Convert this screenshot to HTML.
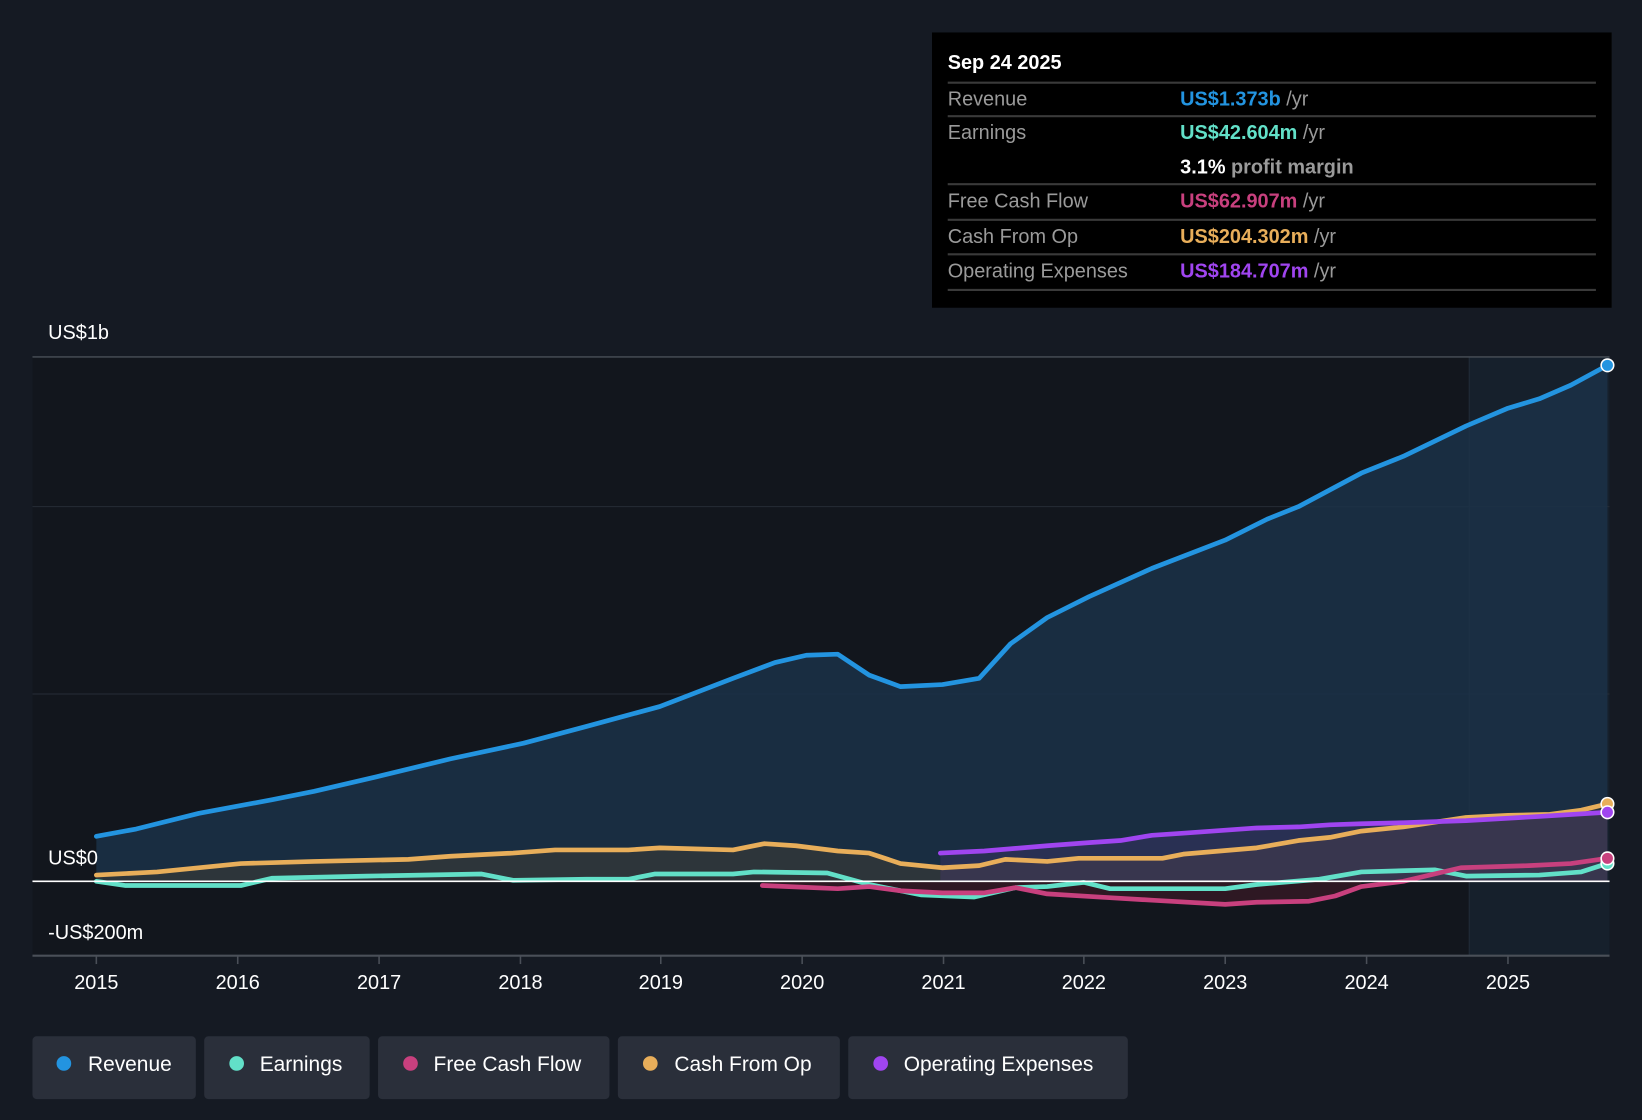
<!DOCTYPE html>
<html><head><meta charset="utf-8"><style>
html,body{margin:0;padding:0;background:#151a23;}
svg{display:block;font-family:"Liberation Sans",sans-serif;}
</style></head><body>
<svg width="1642" height="1120" viewBox="0 0 1568 1070" preserveAspectRatio="none">
<rect width="1568" height="1070" fill="#151a23"/>
<!-- plot background -->
<rect x="31" y="341" width="1506" height="572" fill="#12161d"/>
<rect x="1403" y="341" width="134" height="572" fill="#16202c"/>
<line x1="1403" y1="341" x2="1403" y2="913" stroke="#222b37" stroke-width="1"/>
<!-- gridlines -->
<line x1="31" y1="341" x2="1537" y2="341" stroke="#4a4f58" stroke-width="1.2"/>
<line x1="31" y1="484" x2="1537" y2="484" stroke="#262c36" stroke-width="1"/>
<line x1="31" y1="663" x2="1537" y2="663" stroke="#262c36" stroke-width="1"/>
<!-- revenue fill -->
<path d="M92,799 L130,792 L190,777 L260,764 L300,756 L360,742 L430,725 L500,710 L560,694 L630,675 L700,648 L740,633 L770,626 L800,625 L830,645 L860,656 L900,654 L935,648 L965,615 L1000,590 L1040,570 L1100,543 L1170,516 L1210,496 L1240,484 L1300,452 L1340,436 L1400,407 L1440,390 L1470,381 L1500,368 L1535,349 L1535,842 L92,842 Z" fill="#1b3148" opacity="0.85"/>
<!-- cfo fill -->
<path d="M92,836 L150,833 L230,825 L300,823 L390,821 L430,818 L490,815 L530,812 L600,812 L630,810 L700,812 L730,806 L760,808 L800,813 L830,815 L860,825 L900,829 L935,827 L960,821 L1000,823 L1030,820 L1110,820 L1130,816 L1200,810 L1240,803 L1270,800 L1300,794 L1340,790 L1400,781 L1440,779 L1480,778 L1510,774 L1535,768 L1535,842 L92,842 Z" fill="#3a3a35" opacity="0.6"/>
<path d="M898,815 L940,813 L1000,808 L1040,805 L1070,803 L1100,798 L1130,796 L1200,791 L1240,790 L1270,788 L1300,787 L1340,786 L1400,784 L1470,780 L1535,776 L1535,842 L898,842 Z" fill="#5a3a8a" opacity="0.25"/>
<path d="M728,846 L800,849 L830,847 L860,851 L900,853 L940,853 L970,848 L1000,854 L1050,857 L1100,860 L1170,864 L1200,862 L1250,861 L1275,856 L1300,847 L1300,842 L728,842 Z" fill="#4a1a2a" opacity="0.5"/>
<!-- lines -->
<g fill="none" stroke-width="4.5" stroke-linejoin="round" stroke-linecap="round">
<path stroke="#e8ae5a" d="M92,836 L150,833 L230,825 L300,823 L390,821 L430,818 L490,815 L530,812 L600,812 L630,810 L700,812 L730,806 L760,808 L800,813 L830,815 L860,825 L900,829 L935,827 L960,821 L1000,823 L1030,820 L1110,820 L1130,816 L1200,810 L1240,803 L1270,800 L1300,794 L1340,790 L1400,781 L1440,779 L1480,778 L1510,774 L1535,768"/>
<path stroke="#62e0c8" d="M92,842 L120,846 L230,846 L260,839 L350,837 L460,835 L490,841 L560,840 L600,840 L625,835 L700,835 L720,833 L790,834 L830,845 L880,855 L930,857 L970,848 L1000,847 L1035,843 L1060,849 L1170,849 L1200,845 L1260,840 L1300,833 L1370,831 L1400,837 L1470,836 L1510,833 L1535,825"/>
<path stroke="#c8407e" d="M728,846 L800,849 L830,847 L860,851 L900,853 L940,853 L970,848 L1000,854 L1050,857 L1100,860 L1170,864 L1200,862 L1250,861 L1275,856 L1300,847 L1340,842 L1395,829 L1460,827 L1500,825 L1535,820"/>
<path stroke="#a045f0" d="M898,815 L940,813 L1000,808 L1040,805 L1070,803 L1100,798 L1130,796 L1200,791 L1240,790 L1270,788 L1300,787 L1340,786 L1400,784 L1470,780 L1535,776"/>
<path stroke="#2394e0" d="M92,799 L130,792 L190,777 L260,764 L300,756 L360,742 L430,725 L500,710 L560,694 L630,675 L700,648 L740,633 L770,626 L800,625 L830,645 L860,656 L900,654 L935,648 L965,615 L1000,590 L1040,570 L1100,543 L1170,516 L1210,496 L1240,484 L1300,452 L1340,436 L1400,407 L1440,390 L1470,381 L1500,368 L1535,349"/>
</g>
<line x1="31" y1="842" x2="1537" y2="842" stroke="#ffffff" stroke-width="1.5"/>
<line x1="31" y1="913" x2="1537" y2="913" stroke="#4a4f58" stroke-width="2"/>
<!-- end dots -->
<g stroke="#ffffff" stroke-width="1.5">
<circle cx="1535" cy="768" r="6" fill="#e8ae5a"/>
<circle cx="1535" cy="776" r="6" fill="#a045f0"/>
<circle cx="1535" cy="825" r="6" fill="#62e0c8"/>
<circle cx="1535" cy="820" r="6" fill="#c8407e"/>
<circle cx="1535" cy="349" r="6" fill="#2394e0"/>
</g>
<!-- y labels -->
<g fill="#ffffff" font-size="19">
<text x="46" y="324">US$1b</text>
<text x="46" y="826">US$0</text>
<text x="46" y="897">-US$200m</text>
</g>
<!-- x ticks & labels -->
<g stroke="#4a4f58" stroke-width="1.5">
<line x1="92" y1="913" x2="92" y2="921"/><line x1="227" y1="913" x2="227" y2="921"/><line x1="362" y1="913" x2="362" y2="921"/><line x1="497" y1="913" x2="497" y2="921"/><line x1="631" y1="913" x2="631" y2="921"/><line x1="766" y1="913" x2="766" y2="921"/><line x1="901" y1="913" x2="901" y2="921"/><line x1="1035" y1="913" x2="1035" y2="921"/><line x1="1170" y1="913" x2="1170" y2="921"/><line x1="1305" y1="913" x2="1305" y2="921"/><line x1="1440" y1="913" x2="1440" y2="921"/>
</g>
<g fill="#ffffff" font-size="19" text-anchor="middle">
<text x="92" y="945">2015</text><text x="227" y="945">2016</text><text x="362" y="945">2017</text><text x="497" y="945">2018</text><text x="631" y="945">2019</text><text x="766" y="945">2020</text><text x="901" y="945">2021</text><text x="1035" y="945">2022</text><text x="1170" y="945">2023</text><text x="1305" y="945">2024</text><text x="1440" y="945">2025</text>
</g>
<!-- tooltip -->
<rect x="890" y="31" width="649" height="263" fill="#000000"/>
<g stroke="#3a3a3a" stroke-width="2">
<line x1="905" y1="79" x2="1524" y2="79"/><line x1="905" y1="111" x2="1524" y2="111"/><line x1="905" y1="176" x2="1524" y2="176"/><line x1="905" y1="210" x2="1524" y2="210"/><line x1="905" y1="243" x2="1524" y2="243"/><line x1="905" y1="277" x2="1524" y2="277"/>
</g>
<g font-size="19">
<text x="905" y="66" fill="#ffffff" font-weight="bold">Sep 24 2025</text>
<text x="905" y="101" fill="#9a9a9a">Revenue</text>
<text x="905" y="133" fill="#9a9a9a">Earnings</text>
<text x="905" y="198" fill="#9a9a9a">Free Cash Flow</text>
<text x="905" y="232" fill="#9a9a9a">Cash From Op</text>
<text x="905" y="265" fill="#9a9a9a">Operating Expenses</text>
<text x="1127" y="101"><tspan fill="#2394e0" font-weight="bold">US$1.373b</tspan><tspan fill="#9a9a9a"> /yr</tspan></text>
<text x="1127" y="133"><tspan fill="#62e0c8" font-weight="bold">US$42.604m</tspan><tspan fill="#9a9a9a"> /yr</tspan></text>
<text x="1127" y="166"><tspan fill="#ffffff" font-weight="bold">3.1%</tspan><tspan fill="#9a9a9a" font-weight="bold"> profit margin</tspan></text>
<text x="1127" y="198"><tspan fill="#c8407e" font-weight="bold">US$62.907m</tspan><tspan fill="#9a9a9a"> /yr</tspan></text>
<text x="1127" y="232"><tspan fill="#e8ae5a" font-weight="bold">US$204.302m</tspan><tspan fill="#9a9a9a"> /yr</tspan></text>
<text x="1127" y="265"><tspan fill="#a045f0" font-weight="bold">US$184.707m</tspan><tspan fill="#9a9a9a"> /yr</tspan></text>
</g>
<!-- legend -->
<g fill="#2a2f3a">
<rect x="31" y="990" width="156" height="60" rx="4"/>
<rect x="195" y="990" width="158" height="60" rx="4"/>
<rect x="361" y="990" width="221" height="60" rx="4"/>
<rect x="590" y="990" width="212" height="60" rx="4"/>
<rect x="810" y="990" width="267" height="60" rx="4"/>
</g>
<circle cx="61" cy="1016" r="7" fill="#2394e0"/>
<circle cx="226" cy="1016" r="7" fill="#62e0c8"/>
<circle cx="392" cy="1016" r="7" fill="#c8407e"/>
<circle cx="621" cy="1016" r="7" fill="#e8ae5a"/>
<circle cx="841" cy="1016" r="7" fill="#a045f0"/>
<g fill="#ffffff" font-size="20">
<text x="84" y="1023">Revenue</text>
<text x="248" y="1023">Earnings</text>
<text x="414" y="1023">Free Cash Flow</text>
<text x="644" y="1023">Cash From Op</text>
<text x="863" y="1023">Operating Expenses</text>
</g>
</svg>
</body></html>
